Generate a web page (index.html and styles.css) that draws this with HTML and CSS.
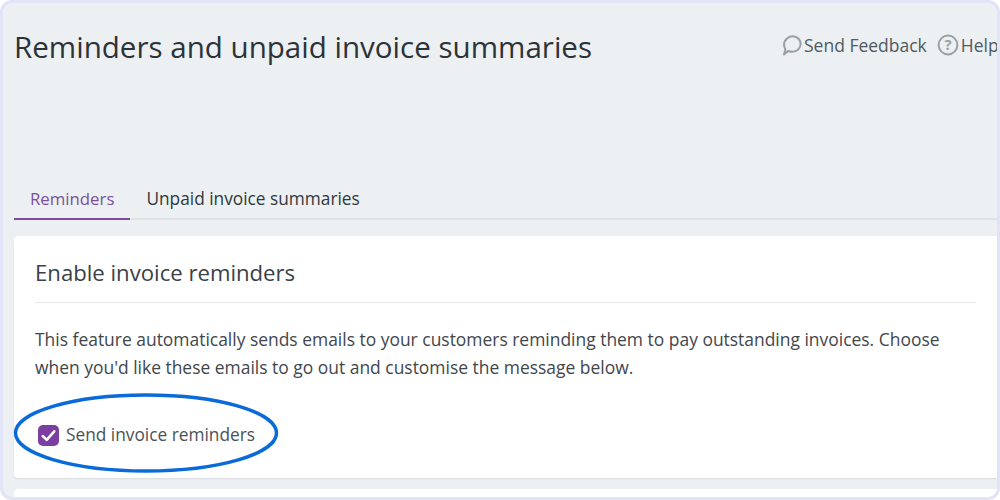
FILE: index.html
```html
<!DOCTYPE html>
<html lang="en">
<head>
<meta charset="utf-8">
<title>Reminders and unpaid invoice summaries</title>
<link rel="stylesheet" href="styles.css">
</head>
<body>
<main class="frame">
  <header class="top">
    <h1 class="title">Reminders and unpaid invoice summaries</h1>
    <nav class="links">
      <a class="link">
        <svg class="icon" viewBox="0 0 22 22" aria-hidden="true"><path d="M2 20.5 L3.4 15.5 C1.400 11.500 2 7 5.300 4.200 C8.800 1.400 13.800 1.800 16.800 5 C19.400 8 19.200 12.600 16.200 15.400 C13.200 18 9.200 18.200 6.200 17 Z" fill="none" stroke="#98a1a5" stroke-width="2" stroke-linejoin="round"/></svg>
        <span>Send Feedback</span>
      </a>
      <a class="link help">
        <svg class="icon" viewBox="0 0 22 22" aria-hidden="true"><circle cx="11" cy="11" r="9.400" fill="none" stroke="#98a1a5" stroke-width="2"/><text x="11" y="16.200" text-anchor="middle" class="qmark">?</text></svg>
        <span>Help</span>
      </a>
    </nav>
  </header>
  <div class="tabs">
    <a class="tab active">Reminders</a>
    <a class="tab">Unpaid invoice summaries</a>
  </div>
  <section class="card">
    <h2 class="card-title">Enable invoice reminders</h2>
    <p class="desc">This feature automatically sends emails to your customers reminding them to pay outstanding invoices. Choose when you'd like these emails to go out and customise the message below.</p>
    <label class="check">
      <span class="box"><svg viewBox="0 0 20 20" aria-hidden="true"><path d="M4.500 10.500 L8.300 14.200 L15.500 6" fill="none" stroke="#fff" stroke-width="2.400" stroke-linecap="round" stroke-linejoin="round"/></svg></span>
      <span>Send invoice reminders</span>
    </label>
  </section>
  <section class="card-next"></section>
  <svg class="ring" viewBox="0 0 270 82" aria-hidden="true"><ellipse cx="135" cy="41" rx="130.500" ry="38" fill="none" stroke="#0a6ad8" stroke-width="3.400"/></svg>
</main>
</body>
</html>
```
FILE: styles.css
```css
* { box-sizing: border-box; }
html, body { margin: 0; height: 100%; background: #fff; }
body { font-family: "Open Sans", "Noto Sans", sans-serif; overflow: hidden; }
.frame {
  position: relative;
  width: 1000px;
  height: 500px;
  background: #ecf0f3;
  border: 3px solid #e1e3f6;
  border-radius: 12px;
  padding: 0 0 0 11px;
  overflow: hidden;
}
.top { display: flex; justify-content: space-between; align-items: flex-start; height: 171px; padding-top: 23px; }
.title { margin: 0; font-size: 29.550px; line-height: 42px; font-weight: 400; color: #2c3338; white-space: nowrap; }
.links { display: flex; gap: 10px; margin-top: 7px; width: 215px; flex: none; overflow: hidden; }
.link { display: flex; align-items: center; flex: none; font-size: 17.500px; line-height: 24px; color: #4f5a60; white-space: nowrap; }
.help { gap: 2px; }
.icon { width: 22px; height: 22px; flex: none; }
.qmark { font-size: 15px; font-weight: 700; fill: #98a1a5; font-family: "Open Sans", sans-serif; }
.tabs { display: flex; border-bottom: 2px solid #dfe3e5; height: 46px; margin-right: -3px; }
.tab { font-size: 17.300px; line-height: 24px; padding: 13px 16px 0; height: 46px; color: #30383d; }
.active { font-size: 16.800px; color: #7b4f9d; border-bottom: 2px solid #7f4a9c; }
.card {
  background: #fff;
  margin-top: 16px;
  height: 242px;
  padding: 0 21px;
  border-radius: 4px 0 0 4px;
  box-shadow: 0 1px 2px rgba(0,0,0,.08);
}
.card-title { margin: 0; font-size: 22.150px; line-height: 72px; height: 67px; font-weight: 400; color: #3a4247; border-bottom: 1px solid #e6e8ea; }
.desc { margin: 22px 0 0; font-size: 17.450px; line-height: 28px; color: #3f474c; }
.check { display: flex; align-items: center; gap: 7px; margin-top: 42px; font-size: 17.300px; line-height: 24px; color: #4a5156; margin-left: 3px; }
.box { width: 21px; height: 21px; border-radius: 5px; background: #7d3f9f; display: flex; flex: none; }
.box svg { width: 21px; height: 21px; }
.card-next { background: #fff; height: 30px; margin-top: 11px; border-radius: 4px 0 0 0; }
.ring { position: absolute; left: 8px; top: 389px; width: 270px; height: 82px; }
```
